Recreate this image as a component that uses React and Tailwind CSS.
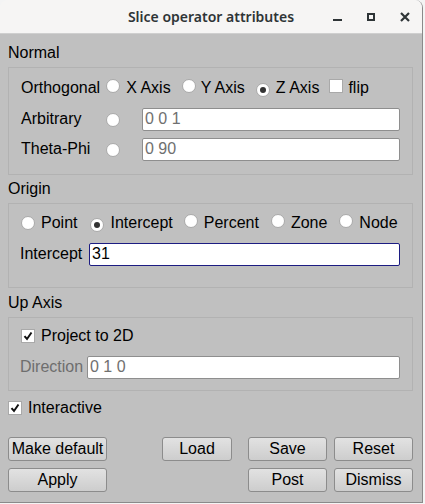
import React from "react";

const F = { fontFamily: '"Liberation Sans", Arial, sans-serif' };

function Radio({ on }) {
  return (
    <span className="relative inline-flex w-[14px] h-[14px] shrink-0 rounded-full bg-white border border-[#a9a9a9] items-center justify-center">
      {on && <span className="w-[6px] h-[6px] rounded-full bg-[#333333]" />}
    </span>
  );
}

function Check({ on }) {
  return (
    <span className="inline-flex w-[14px] h-[14px] shrink-0 bg-white border border-[#a9a9a9] items-center justify-center">
      {on && (
        <svg width="10" height="10" viewBox="0 0 10 10">
          <path d="M1.5 5.2 L4 8 L8.5 1.5" fill="none" stroke="#111" strokeWidth="2" />
        </svg>
      )}
    </span>
  );
}

function Input({ value, focus, gray, className = "" }) {
  return (
    <div
      className={`h-[23px] bg-white rounded-[2px] flex items-center pl-[2px] text-[16px] leading-[18px] pb-[2px] ${
        focus ? "border border-[#1c1c82]" : "border border-[#8e8e8e]"
      } ${gray ? "text-[#707070]" : "text-black"} ${className}`}
    >
      {value}
    </div>
  );
}

function Btn({ children, w }) {
  return (
    <div
      className={`${w} h-[24px] rounded-[3px] border border-[#8c8c8c] bg-gradient-to-b from-[#e2e2e2] to-[#cdcdcd] flex items-center justify-center text-[16px] text-black leading-none`}
    >
      {children}
    </div>
  );
}

function Label({ children, className = "" }) {
  return <div className={`h-[20px] leading-[20px] text-[16px] text-black ${className}`}>{children}</div>;
}

export default function App() {
  return (
    <div className="w-[425px] h-[504px] bg-[#f4f4f4] overflow-hidden" style={F}>
      <div className="w-[423px] h-[503px] flex flex-col rounded-t-[8px] overflow-hidden border-r border-b border-[#8a8a8a]">
        {/* title bar */}
        <div className="h-[34px] shrink-0 bg-[#f6f5f4] border-b border-[#cfcfcf] flex items-center relative">
          <div
            className="absolute left-0 right-0 text-center text-[14px] font-semibold text-[#2e3436]"
            style={{ fontFamily: '"Noto Sans", "DejaVu Sans", sans-serif' }}
          >
            Slice operator attributes
          </div>
          <div className="ml-auto flex items-center relative">
            <div className="w-[34px] h-[34px] flex items-center justify-center">
              <div className="w-[9px] h-[2px] bg-[#2e3436] mt-[6px]" />
            </div>
            <div className="w-[34px] h-[34px] flex items-center justify-center">
              <div className="w-[8px] h-[8px] border-2 border-[#2e3436]" />
            </div>
            <div className="w-[34px] h-[34px] flex items-center justify-center">
              <svg width="10" height="10" viewBox="0 0 10 10">
                <path d="M1 1 L9 9 M9 1 L1 9" stroke="#2e3436" strokeWidth="2.2" />
              </svg>
            </div>
          </div>
        </div>

        {/* body */}
        <div className="flex-1 bg-[#c0c0c0] pl-[8px] pr-[9px] flex flex-col">
          <Label className="mt-[9px]">Normal</Label>
          <div className="mt-[4px] border border-[#b2b2b2] pt-[9px] pb-[13px] px-[12px] flex flex-col">
            <div className="h-[22px] flex items-center text-[16px]">
              <span>Orthogonal</span>
              <span className="ml-[6px]"><Radio /></span>
              <span className="ml-[6px]">X Axis</span>
              <span className="ml-[11px]"><Radio /></span>
              <span className="ml-[5px]">Y Axis</span>
              <span className="ml-[11px]"><Radio on /></span>
              <span className="ml-[6px]">Z Axis</span>
              <span className="ml-[10px]"><Check /></span>
              <span className="ml-[5px]">flip</span>
            </div>
            <div className="mt-[9px] h-[23px] flex items-center text-[16px]">
              <span className="w-[85px] pb-[2px]">Arbitrary</span>
              <Radio />
              <Input value="0 0 1" gray className="ml-[22px] flex-1" />
            </div>
            <div className="mt-[7px] h-[23px] flex items-center text-[16px]">
              <span className="w-[85px] pb-[2px]">Theta-Phi</span>
              <Radio />
              <Input value="0 90" gray className="ml-[22px] flex-1" />
            </div>
          </div>

          <Label className="mt-[4px]">Origin</Label>
          <div className="mt-[4px] border border-[#b2b2b2] pt-[9px] pb-[21px] px-[12px] flex flex-col">
            <div className="h-[20px] flex items-center text-[16px]">
              <Radio />
              <span className="ml-[6px]">Point</span>
              <span className="ml-[13px]"><Radio on /></span>
              <span className="ml-[6px]">Intercept</span>
              <span className="ml-[11px]"><Radio /></span>
              <span className="ml-[6px]">Percent</span>
              <span className="ml-[12px]"><Radio /></span>
              <span className="ml-[6px]">Zone</span>
              <span className="ml-[12px]"><Radio /></span>
              <span className="ml-[6px]">Node</span>
            </div>
            <div className="mt-[10px] h-[23px] flex items-center text-[16px]">
              <span className="w-[68px] -ml-[1px] pb-[2px]">Intercept</span>
              <Input value="31" focus className="ml-[1px] flex-1" />
            </div>
          </div>

          <Label className="mt-[5px]">Up Axis</Label>
          <div className="mt-[4px] border border-[#b2b2b2] pt-[8px] pb-[11px] px-[12px] flex flex-col">
            <div className="h-[20px] flex items-center text-[16px]">
              <Check on />
              <span className="ml-[6px]">Project to 2D</span>
            </div>
            <div className="mt-[10px] h-[23px] flex items-center text-[16px]">
              <span className="w-[67px] -ml-[1px] pb-[2px] text-[#6e6e6e]">Direction</span>
              <Input value="0 1 0" gray className="flex-1" />
            </div>
          </div>

          <div className="mt-[7px] h-[20px] flex items-center text-[16px]">
            <Check on />
            <span className="ml-[6px]">Interactive</span>
          </div>

          <div className="mt-[19px] flex items-center">
            <Btn w="w-[99px]">Make default</Btn>
            <div className="flex-1" />
            <Btn w="w-[70px]">Load</Btn>
            <div className="w-[16px]" />
            <Btn w="w-[79px]">Save</Btn>
            <div className="w-[7px]" />
            <Btn w="w-[79px]">Reset</Btn>
          </div>
          <div className="mt-[7px] flex items-center">
            <Btn w="w-[99px]">Apply</Btn>
            <div className="flex-1" />
            <Btn w="w-[79px]">Post</Btn>
            <div className="w-[7px]" />
            <Btn w="w-[79px]">Dismiss</Btn>
          </div>
        </div>
      </div>
    </div>
  );
}
